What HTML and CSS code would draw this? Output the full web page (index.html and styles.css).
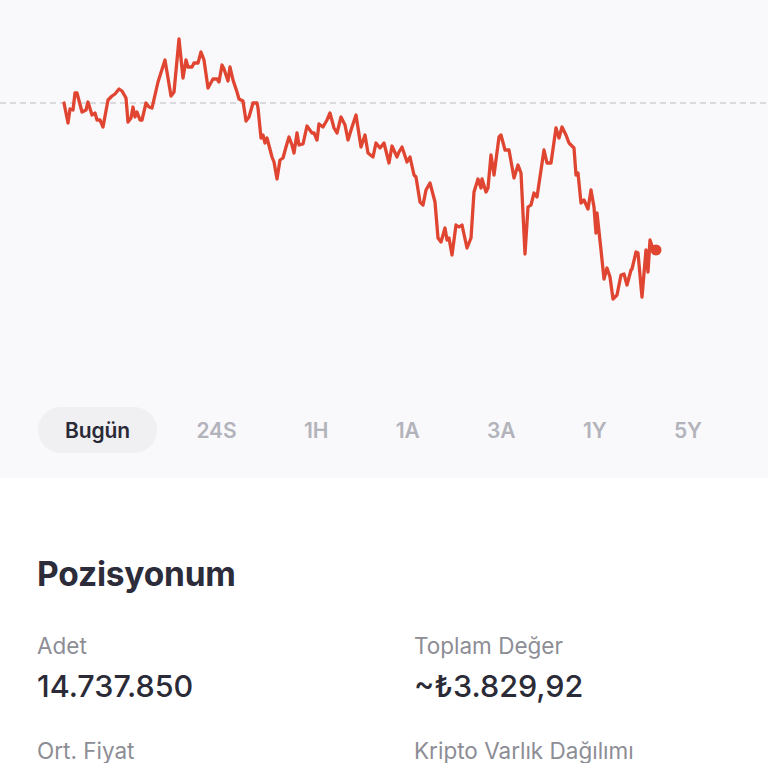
FILE: index.html
```html
<!DOCTYPE html>
<html lang="tr">
<head>
<meta charset="utf-8">
<title>Pozisyonum</title>
<link rel="stylesheet" href="styles.css">
</head>
<body>
<section class="chart-panel">
  <svg class="chart" viewBox="0 0 768 407" width="768" height="407">
    <line class="base" x1="0" y1="103" x2="768" y2="103"/>
    <polyline class="price" points="64,103 68,123 70,109 73,110 75,93 77,93 82,112 86,110 88,102 92,115 95,113 97,120 100,120 103,127 108,100 112,96 115,94 119,89 122,91 126,98 128,122 131,118 133,107 135,117 137,112 140,120 142,120 146,103 149,107 152,108 158,82 165,60 171,96 174,92 179,39 183,78 186,60 188,67 192,67 194,63 198,63 201,52 204,60 208,88 213,79 217,79 219,82 222,65 224,69 228,81 230,67 233,80 237,92 239,99 243,101 246,121 249,117 253,103 257,103 258,108 261,138 263,135 265,143 267,138 272,157 274,162 277,179 280,160 283,158 286,147 289,137 292,145 294,153 297,133 299,145 303,144 307,126 312,133 314,133 317,140 319,124 323,127 327,120 330,113 334,128 337,133 341,117 345,125 348,140 352,127 356,115 361,147 365,135 368,153 373,157 376,143 380,148 384,143 389,163 392,146 397,157 399,152 402,147 407,162 410,157 414,175 416,177 420,202 423,205 426,190 430,183 435,202 438,238 441,242 445,228 447,240 449,238 452,255 456,225 459,227 462,225 467,248 471,238 474,192 478,179 481,188 482,179 486,192 488,188 491,155 494,175 499,137 501,135 505,150 509,150 514,178 518,165 521,173 525,254 528,207 531,205 534,193 537,197 544,150 547,163 551,163 556,128 559,138 562,127 566,135 569,143 574,148 576,175 578,173 581,203 584,200 588,209 591,190 594,207 596,233 597,213 601,250 604,279 607,268 610,277 613,299 617,295 621,275 624,274 627,285 631,270 632,269 636,252 638,253 642,297 646,250 648,272 650,240 652,246 656,250"/>
    <circle class="dot" cx="656" cy="250" r="5.5"/>
  </svg>
  <nav class="tabs">
    <span class="tab active">Bugün</span>
    <span class="tab">24S</span>
    <span class="tab">1H</span>
    <span class="tab">1A</span>
    <span class="tab">3A</span>
    <span class="tab">1Y</span>
    <span class="tab">5Y</span>
  </nav>
</section>
<section class="position">
  <h2 class="title">Pozisyonum</h2>
  <div class="grid">
    <div class="cell">
      <div class="label">Adet</div>
      <div class="value">14.737.850</div>
    </div>
    <div class="cell">
      <div class="label">Toplam Değer</div>
      <div class="value">~₺3.829,92</div>
    </div>
    <div class="cell">
      <div class="label">Ort. Fiyat</div>
    </div>
    <div class="cell">
      <div class="label">Kripto Varlık Dağılımı</div>
    </div>
  </div>
</section>
</body>
</html>
```
FILE: styles.css
```css
* { box-sizing: border-box; }
html, body {
  margin: 0;
  padding: 0;
  background: #ffffff;
  font-family: Inter, "Noto Sans", "Liberation Sans", sans-serif;
  color: #2b2b38;
  overflow: hidden;
}
.chart-panel {
  background: #f9f9fb;
  height: 478px;
  display: flex;
  flex-direction: column;
}
.chart {
  display: block;
  width: 768px;
  height: 407px;
}
.chart .base {
  stroke: #cfcfd5;
  stroke-width: 1.3;
  stroke-dasharray: 6 4;
}
.chart .price {
  fill: none;
  stroke: #df4530;
  stroke-width: 3.3;
  stroke-linejoin: round;
  stroke-linecap: round;
}
.chart .dot {
  fill: #df4530;
}
.tabs {
  display: flex;
  justify-content: space-between;
  align-items: center;
  margin: 0 38px;
}
.tab {
  height: 46px;
  padding: 0 28px;
  display: flex;
  align-items: center;
  border-radius: 23px;
  font-size: 21px;
  font-weight: 600;
  color: #b3b3bb;
  letter-spacing: -0.1px;
}
.tab.active {
  background: #f0f0f3;
  color: #2a2a36;
  padding: 0 27px;
}
.position {
  padding: 76px 37px 0;
}
.title {
  margin: 0;
  font-size: 33.5px;
  line-height: 40px;
  font-weight: 700;
  color: #2c2c3a;
  letter-spacing: -0.2px;
}
.grid {
  margin-top: 40px;
  display: grid;
  grid-template-columns: 377px 1fr;
  row-gap: 35px;
}
.label {
  font-size: 22.5px;
  line-height: 24px;
  color: #8d8d95;
}
.value {
  margin-top: 10px;
  font-size: 30.5px;
  line-height: 36px;
  font-weight: 500;
  color: #2b2b38;
}
```
